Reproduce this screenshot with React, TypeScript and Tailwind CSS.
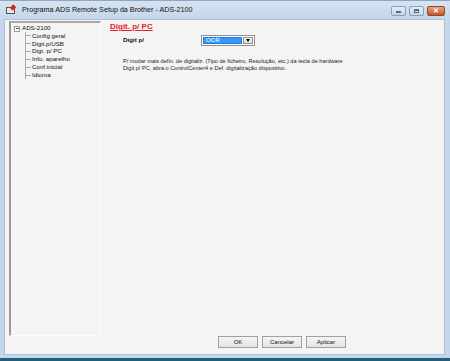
import React from "react";

const font = { fontFamily: '"Liberation Sans", Arial, sans-serif' };

function TreeItem({ label }: { label: string }) {
  return (
    <div className="flex items-center h-[8.4px]">
      <div className="w-[5px] border-t border-[#a8a8a8]" />
      <span className="ml-[1px] text-[6.2px] leading-none text-[#111]">{label}</span>
    </div>
  );
}

export default function App() {
  const items = ["Config geral", "Digit.p/USB", "Digt. p/ PC", "Info. aparelho", "Conf.inicial", "Idioma"];
  return (
    <div className="w-[450px] h-[361px] overflow-hidden flex flex-col bg-[#c3d6eb]" style={font}>
      {/* Title bar */}
      <div className="h-[19px] flex items-center bg-gradient-to-b from-[#d6e3f1] to-[#c5d7eb] border-t border-[#8fa6bf] relative">
        <div className="ml-[5px] w-[11px] h-[10px] relative">
          <div className="absolute left-[1px] top-[2px] w-[9px] h-[7px] border border-[#555] bg-[#e8e8e8]" />
          <div className="absolute left-[6px] top-[0px] w-[4px] h-[5px] bg-[#d22] rotate-45" />
        </div>
        <span className="ml-[6px] text-[7.2px] text-[#111] leading-none">Programa ADS Remote Setup da Brother - ADS-2100</span>
        <div className="ml-auto flex items-center gap-[3px] mr-[5px] mt-[1px]">
          <div className="w-[15px] h-[10px] rounded-[2px] border border-[#8aa0b8] bg-gradient-to-b from-[#e6eef7] to-[#c4d5e8] flex items-end justify-center pb-[2px]">
            <div className="w-[5px] h-[2px] bg-[#5a6a7c]" />
          </div>
          <div className="w-[15px] h-[10px] rounded-[2px] border border-[#8aa0b8] bg-gradient-to-b from-[#e6eef7] to-[#c4d5e8] flex items-center justify-center">
            <div className="w-[5px] h-[4px] border border-[#5a6a7c] border-t-2" />
          </div>
          <div className="w-[18px] h-[10px] rounded-[2px] border border-[#8a4a2a] bg-gradient-to-b from-[#e9a27c] to-[#c9542a] flex items-center justify-center">
            <span className="text-[7px] leading-none font-bold text-white">✕</span>
          </div>
        </div>
      </div>

      {/* Body */}
      <div className="flex-1 flex flex-col pl-[4px] pr-[5px]">
        <div className="flex-1 bg-[#f4f4f4] border border-[#aebfd3] flex flex-col">
          <div className="flex-1 flex pt-[1px]">
            {/* Tree */}
            <div className="ml-[4px] w-[92px] h-[315px] border-l-2 border-t-2 border-l-[#9a9a9a] border-t-[#a8a8a8] border-r border-b border-r-[#fcfcfc] border-b-[#fcfcfc] bg-[#f4f4f4] pl-[3px] pt-[2px]">
              <div className="flex items-center h-[7px]">
                <div className="w-[6px] h-[6px] border border-[#9a9a9a] flex items-center justify-center bg-white">
                  <div className="w-[3px] h-[1px] bg-[#555]" />
                </div>
                <span className="ml-[2px] text-[6.2px] leading-none text-[#111]">ADS-2100</span>
              </div>
              <div className="ml-[11px] flex border-l border-[#a8a8a8] h-[47px]">
                <div className="flex flex-col pt-[0px]">
                  {items.map((it) => (
                    <TreeItem key={it} label={it} />
                  ))}
                </div>
              </div>
            </div>

            {/* Content */}
            <div className="flex-1 pl-[9px] pt-[1px]">
              <div className="text-[8px] leading-[10px] font-bold text-[#e8202a] underline">Digit. p/ PC</div>
              <div className="flex items-center mt-[3px] ml-[13px]">
                <span className="text-[6.2px] font-bold text-[#111] w-[78px] leading-none">Digit p/</span>
                <div className="w-[54px] h-[11px] border border-[#8e8f8f] bg-white flex items-center p-[1px]">
                  <div className="flex-1 h-full bg-[#3399ff] border border-dotted border-[#1d5fa8] flex items-center pl-[2px]">
                    <span className="text-[6.2px] text-white leading-none">OCR</span>
                  </div>
                  <div className="w-[10px] h-full ml-[1px] border border-[#8e8f8f] bg-gradient-to-b from-[#f6f6f6] to-[#dcdcdc] flex items-center justify-center">
                    <div className="w-0 h-0 border-l-[2.5px] border-r-[2.5px] border-t-[3px] border-l-transparent border-r-transparent border-t-black" />
                  </div>
                </div>
              </div>
              <div className="mt-[12px] ml-[13px] text-[5.6px] leading-[6.5px] text-[#222]">
                <div>P/ mudar mais defin. de digitaliz. (Tipo de ficheiro, Resolução, etc.) da tecla de hardware</div>
                <div>Digit p/ PC, abra o ControlCenter4 e Def. digitalização dispositivo.</div>
              </div>
            </div>
          </div>

          {/* Buttons */}
          <div className="h-[18px] flex items-start pl-[213px] gap-[4px]">
            {["OK", "Cancelar", "Aplicar"].map((b) => (
              <div
                key={b}
                className="w-[40px] h-[12px] border border-[#a0a0a0] bg-gradient-to-b from-[#f5f5f5] to-[#e3e3e3] flex items-center justify-center"
              >
                <span className="text-[6px] leading-none text-[#111]">{b}</span>
              </div>
            ))}
          </div>
        </div>
        <div className="h-[3px]" />
      </div>
      <div className="h-[3px] bg-[#1f5d78]" />
    </div>
  );
}
